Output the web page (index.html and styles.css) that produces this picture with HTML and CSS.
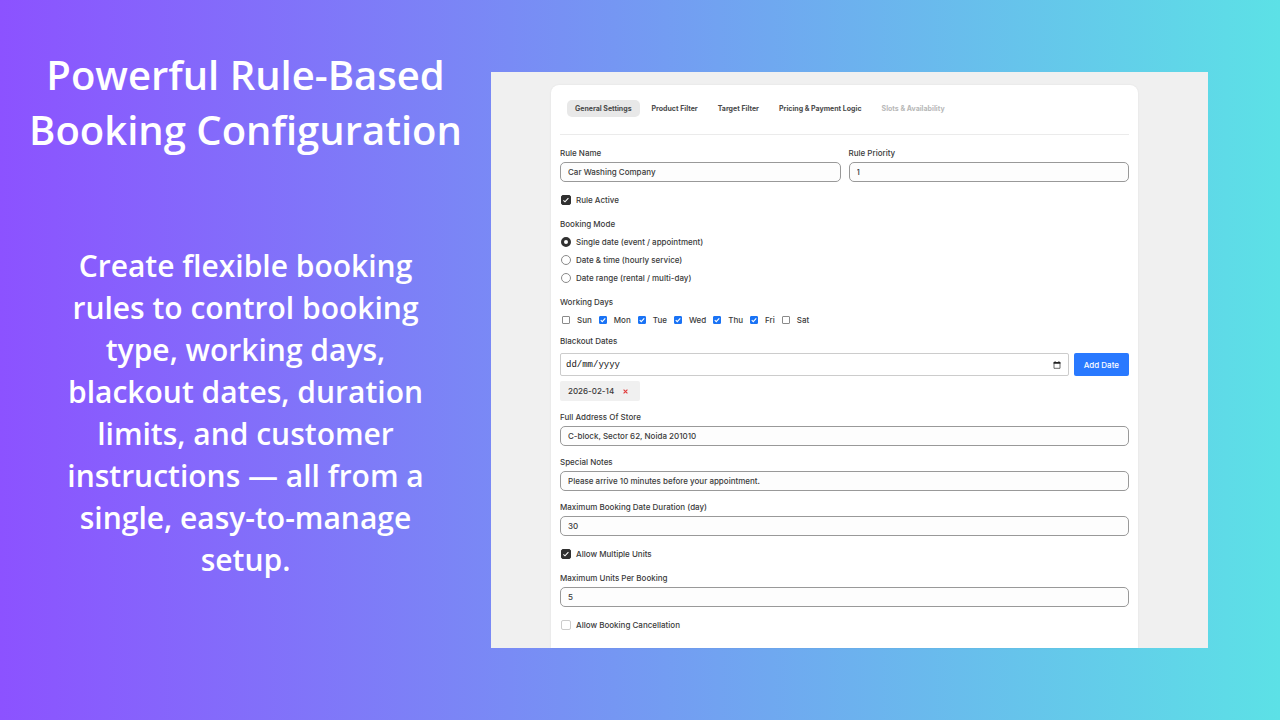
FILE: index.html
```html
<!DOCTYPE html>
<html lang="en">
<head>
<meta charset="utf-8">
<meta name="viewport" content="width=device-width, initial-scale=1">
<title>Booking Configuration</title>
<link rel="stylesheet" href="styles.css">
</head>
<body>
<main class="slide">
  <section class="intro">
    <h1 class="intro-title">Powerful Rule-Based Booking Configuration</h1>
    <p class="intro-text">Create flexible booking rules to control booking type, working days, blackout dates, duration limits, and customer instructions — all from a single, easy-to-manage setup.</p>
  </section>
  <section class="preview">
    <form class="card">
      <nav class="tabs">
        <button type="button" class="tab tab-active">General Settings</button>
        <button type="button" class="tab">Product Filter</button>
        <button type="button" class="tab">Target Filter</button>
        <button type="button" class="tab">Pricing &amp; Payment Logic</button>
        <button type="button" class="tab" disabled>Slots &amp; Availability</button>
      </nav>
      <div class="field-row">
        <div class="field">
          <label for="name">Rule Name</label>
          <input class="input" id="name" type="text" value="Car Washing Company">
        </div>
        <div class="field">
          <label for="priority">Rule Priority</label>
          <input class="input" id="priority" type="text" value="1">
        </div>
      </div>
      <label class="choice choice-block"><input class="check" type="checkbox" checked>Rule Active</label>
      <fieldset class="group">
        <legend>Booking Mode</legend>
        <div class="modes">
          <label class="choice"><input class="radio" type="radio" name="mode" checked>Single date (event / appointment)</label>
          <label class="choice"><input class="radio" type="radio" name="mode">Date &amp; time (hourly service)</label>
          <label class="choice"><input class="radio" type="radio" name="mode">Date range (rental / multi-day)</label>
        </div>
      </fieldset>
      <fieldset class="group">
        <legend>Working Days</legend>
        <div class="days">
          <label class="day"><input class="day-check" type="checkbox">Sun</label>
          <label class="day"><input class="day-check" type="checkbox" checked>Mon</label>
          <label class="day"><input class="day-check" type="checkbox" checked>Tue</label>
          <label class="day"><input class="day-check" type="checkbox" checked>Wed</label>
          <label class="day"><input class="day-check" type="checkbox" checked>Thu</label>
          <label class="day"><input class="day-check" type="checkbox" checked>Fri</label>
          <label class="day"><input class="day-check" type="checkbox">Sat</label>
        </div>
      </fieldset>
      <div class="blackout">
        <label for="blackout">Blackout Dates</label>
        <div class="date-row">
          <div class="date-box">
            <input class="date-input" id="blackout" type="text" placeholder="dd/mm/yyyy">
            <button type="button" class="date-picker" aria-label="Open calendar">
              <svg width="8" height="8" viewBox="0 0 8 8"><path d="M1 1.5h6v5.8h-6z" fill="none" stroke="#444" stroke-width=".8"/><path d="M.6 1h6.8v1.7H.6zM1.6.3h1v1h-1zM5.4.3h1v1h-1z" fill="#222"/></svg>
            </button>
          </div>
          <button type="button" class="add">Add Date</button>
        </div>
        <div class="chip">2026-02-14
          <button type="button" class="chip-remove" aria-label="Remove date"><svg width="5" height="5" viewBox="0 0 5 5"><path d="M.6.6l3.8 3.8M4.4.6L.6 4.4" stroke="#e03a3a" stroke-width="1.1" fill="none"/></svg></button>
        </div>
      </div>
      <div class="fields">
        <div class="field">
          <label for="address">Full Address Of Store</label>
          <input class="input" id="address" type="text" value="C-block, Sector 62, Noida 201010">
        </div>
        <div class="field">
          <label for="notes">Special Notes</label>
          <input class="input" id="notes" type="text" value="Please arrive 10 minutes before your appointment.">
        </div>
        <div class="field">
          <label for="duration">Maximum Booking Date Duration (day)</label>
          <input class="input" id="duration" type="text" value="30">
        </div>
      </div>
      <label class="choice choice-block"><input class="check" type="checkbox" checked>Allow Multiple Units</label>
      <div class="field">
        <label for="units">Maximum Units Per Booking</label>
        <input class="input" id="units" type="text" value="5">
      </div>
      <label class="choice choice-block"><input class="check check-light" type="checkbox">Allow Booking Cancellation</label>
    </form>
  </section>
</main>
</body>
</html>
```
FILE: styles.css
```css
* { box-sizing: border-box; }

body { margin: 0; }

button, input { font: inherit; color: inherit; }

.slide {
  display: flex;
  min-height: 100vh;
  background: linear-gradient(90deg, #8c52ff, #5ce1e6);
}

.intro {
  flex: 0 0 491px;
  padding: 47px 24px;
  font-family: "Open Sans", "Noto Sans", sans-serif;
  font-weight: 600;
  text-align: center;
  color: #fff;
}

.intro-title {
  margin: 0;
  font-size: 40px;
  line-height: 55px;
  font-weight: 600;
}

.intro-text {
  margin: 88px 40px 0;
  font-size: 30px;
  line-height: 42px;
}

.preview {
  flex: 1;
  display: flex;
  margin: 72px 72px 72px 0;
  padding: 13px 70px 0 60px;
  background: #f0f0f0;
}

.card {
  flex: 1;
  padding: 15px 9px 4px;
  background: #fff;
  border-radius: 8px 8px 0 0;
  box-shadow: 0 0 2px rgba(0, 0, 0, .08);
  font-family: Inter, "Liberation Sans", sans-serif;
  font-size: 8px;
  line-height: 12px;
  font-weight: 500;
  color: #3a3a3a;
}

.tabs {
  display: flex;
  gap: 4px;
  padding: 0 7px 17px;
  margin-bottom: 12px;
  border-bottom: 1px solid #ebebeb;
}

.tab {
  height: 17px;
  padding: 0 8px;
  border: 0;
  border-radius: 5px;
  background: none;
  font-size: 7px;
  line-height: 17px;
  font-weight: 700;
  color: #4a4a4a;
}

.tab-active { background: #e8e8e8; }

.tab:disabled { color: #b8b8b8; }

.field-row {
  display: grid;
  grid-template-columns: 1fr 1fr;
  gap: 8px;
}

.fields {
  display: grid;
  gap: 10px;
}

.field {
  display: flex;
  flex-direction: column;
  gap: 3px;
}

.input {
  width: 100%;
  height: 20px;
  padding: 0 7px 1px;
  border: 1px solid #999;
  border-radius: 5px;
  background: #fdfdfd;
}

.choice {
  display: flex;
  align-items: center;
  gap: 5px;
}

.choice-block { margin: 12px 0; }

.check, .radio, .day-check {
  appearance: none;
  flex: none;
  margin: 0;
  border: 1px solid #b0b0b0;
  background: #fff center / 100% no-repeat;
}

.check {
  width: 10px;
  height: 10px;
  border-radius: 2px;
  margin-left: 1px;
}

.check-light { border-color: #ccc; }

.check:checked {
  border-color: #303030;
  background-color: #303030;
  background-image: url("data:image/svg+xml,%3Csvg xmlns='http://www.w3.org/2000/svg' viewBox='0 0 8 8'%3E%3Cpath d='M1.4 4.3l1.6 1.5 3.4-3.6' fill='none' stroke='white' stroke-width='1.1'/%3E%3C/svg%3E");
}

.radio {
  width: 10px;
  height: 10px;
  margin-left: 1px;
  border-color: #8a8a8a;
  border-radius: 50%;
}

.radio:checked { border: 3px solid #303030; }

.group {
  margin: 0 0 12px;
  padding: 0;
  border: 0;
}

.group legend {
  padding: 0;
  margin-bottom: 6px;
}

.modes {
  display: grid;
  gap: 6px;
}

.days {
  display: flex;
  gap: 7px;
  padding-left: 2px;
}

.day {
  display: flex;
  align-items: center;
  gap: 7px;
}

.day-check {
  width: 8px;
  height: 8px;
  border-color: #8a8a8a;
  border-radius: 1px;
}

.day-check:checked {
  border-color: #1a73f5;
  background-color: #1a73f5;
  background-image: url("data:image/svg+xml,%3Csvg xmlns='http://www.w3.org/2000/svg' viewBox='0 0 8 8'%3E%3Cpath d='M1 4.2l2 2 4-4.4' fill='none' stroke='white' stroke-width='1.5'/%3E%3C/svg%3E");
}

.blackout { margin: -3px 0 10px; }

.date-row {
  display: flex;
  gap: 5px;
  margin: 6px 0 5px;
}

.date-box {
  flex: 1;
  display: flex;
  align-items: center;
  height: 23px;
  padding: 0 7px 0 5px;
  border: 1px solid #ccc;
  border-radius: 2px;
}

.date-input {
  flex: 1;
  min-width: 0;
  padding: 0;
  border: 0;
  outline: 0;
  background: none;
  font-family: "Liberation Mono", monospace;
  font-size: 9px;
}

.date-input::placeholder { color: #111; }

.date-picker, .chip-remove {
  display: flex;
  padding: 0;
  border: 0;
  background: none;
}

.add {
  padding: 0 10px;
  border: 0;
  border-radius: 2px;
  background: #2979ff;
  color: #fff;
}

.chip {
  display: inline-flex;
  align-items: center;
  gap: 9px;
  height: 20px;
  padding: 0 12px 0 8px;
  border-radius: 2px;
  background: #f0f0f0;
  vertical-align: top;
}
```
